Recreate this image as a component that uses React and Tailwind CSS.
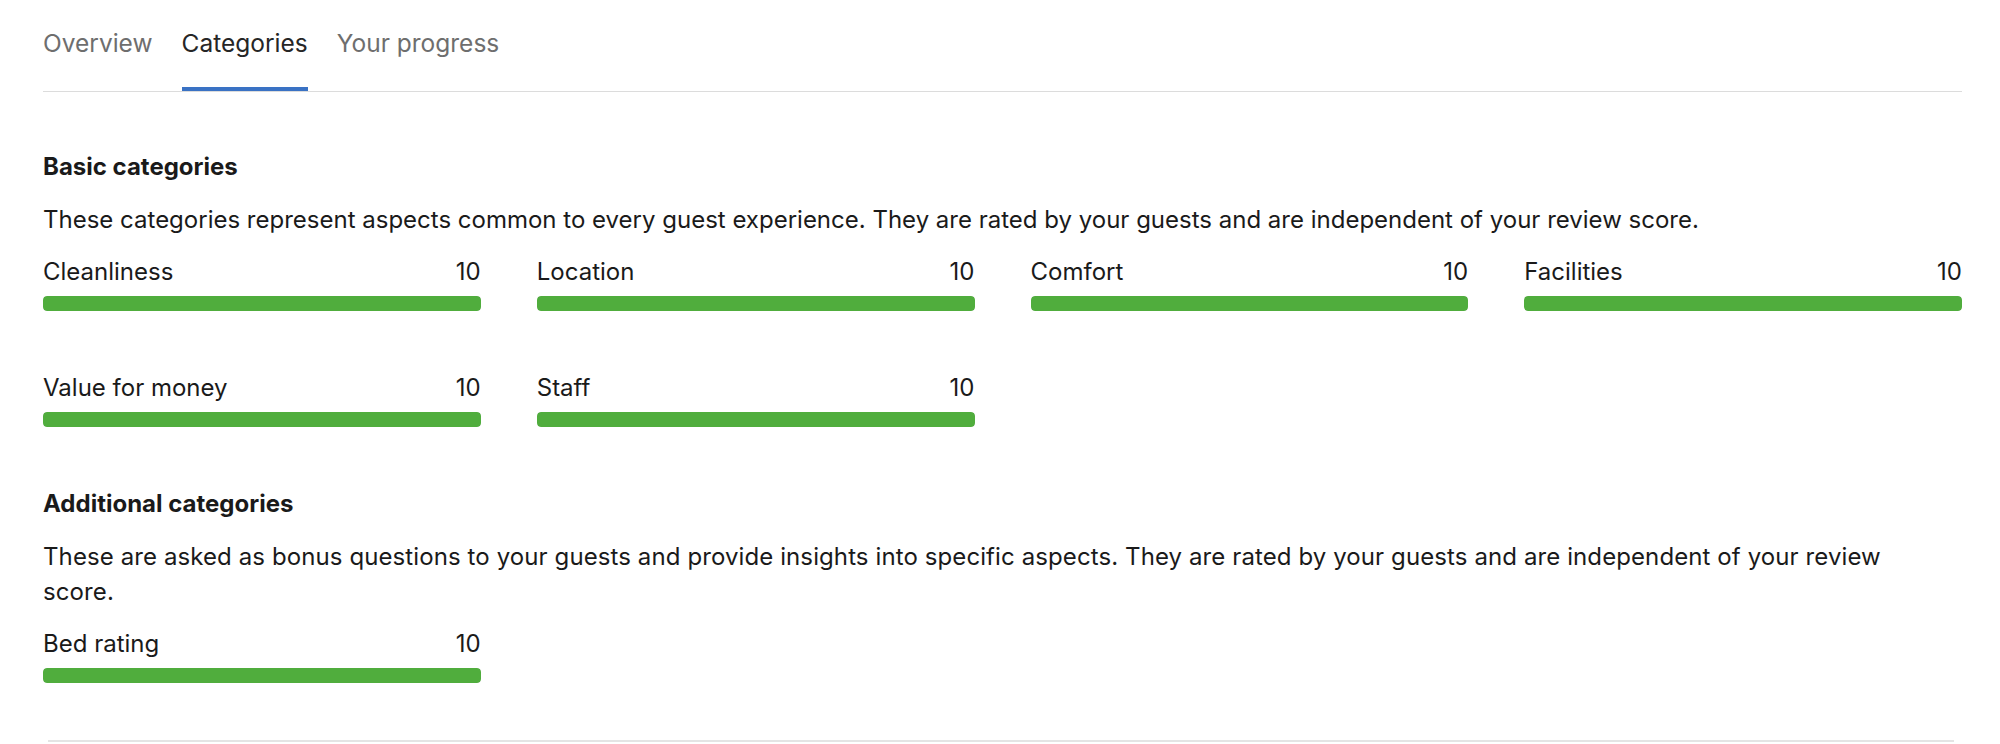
import { useState } from "react";

const basic = [
  { label: "Cleanliness", score: 10 },
  { label: "Location", score: 10 },
  { label: "Comfort", score: 10 },
  { label: "Facilities", score: 10 },
  { label: "Value for money", score: 10 },
  { label: "Staff", score: 10 },
];

const additional = [{ label: "Bed rating", score: 10 }];

const tabs = ["Overview", "Categories", "Your progress"];

function ScoreBar({ label, score }) {
  return (
    <div className="flex flex-col">
      <div className="flex items-center justify-between leading-[32px]">
        <span>{label}</span>
        <span>{score}</span>
      </div>
      <div className="mt-2 h-[15px] w-full rounded-[4px] bg-[#e6e6e6] overflow-hidden">
        <div className="h-full rounded-[4px] bg-[#50ad3d]" style={{ width: `${(score / 10) * 100}%` }} />
      </div>
    </div>
  );
}

export default function App() {
  const [active, setActive] = useState("Categories");

  return (
    <div
      className="min-h-[744px] bg-white pl-[43px] pr-[38px] text-[24px] text-[#1a1a1a]"
      style={{ fontFamily: "Inter, 'Liberation Sans', sans-serif" }}
    >
      {/* Tabs */}
      <nav className="flex gap-[29px] border-b border-[#dcdcdc]">
        {tabs.map(t => (
          <button
            key={t}
            onClick={() => setActive(t)}
            className={
              "pt-[27px] pb-[28px] text-[24.5px] leading-[32px] border-b-4 " +
              (active === t ? "border-[#3a72c4] text-[#262626]" : "border-transparent text-[#6e6e6e]")
            }
          >
            {t}
          </button>
        ))}
      </nav>

      {/* Basic */}
      <h2 className="mt-[59px] font-bold leading-[32px]">Basic categories</h2>
      <p className="mt-[19px] leading-[35px]">
        These categories represent aspects common to every guest experience. They are rated by your guests and are independent of your review score.
      </p>
      <div className="mt-[19px] grid grid-cols-4 gap-x-[56px] gap-y-[61px]">
        {basic.map(c => <ScoreBar key={c.label} {...c} />)}
      </div>

      {/* Additional */}
      <h2 className="mt-[61px] font-bold leading-[32px]">Additional categories</h2>
      <p className="mt-[19px] max-w-[1890px] leading-[35px] tracking-[0.1px]">
        These are asked as bonus questions to your guests and provide insights into specific aspects. They are rated by your guests and are independent of your review score.
      </p>
      <div className="mt-[19px] grid grid-cols-4 gap-x-[56px]">
        {additional.map(c => <ScoreBar key={c.label} {...c} />)}
      </div>

      <div className="mt-[57px] ml-[5px] mr-[8px] border-t-2 border-[#e4e4e4]" />
    </div>
  );
}
